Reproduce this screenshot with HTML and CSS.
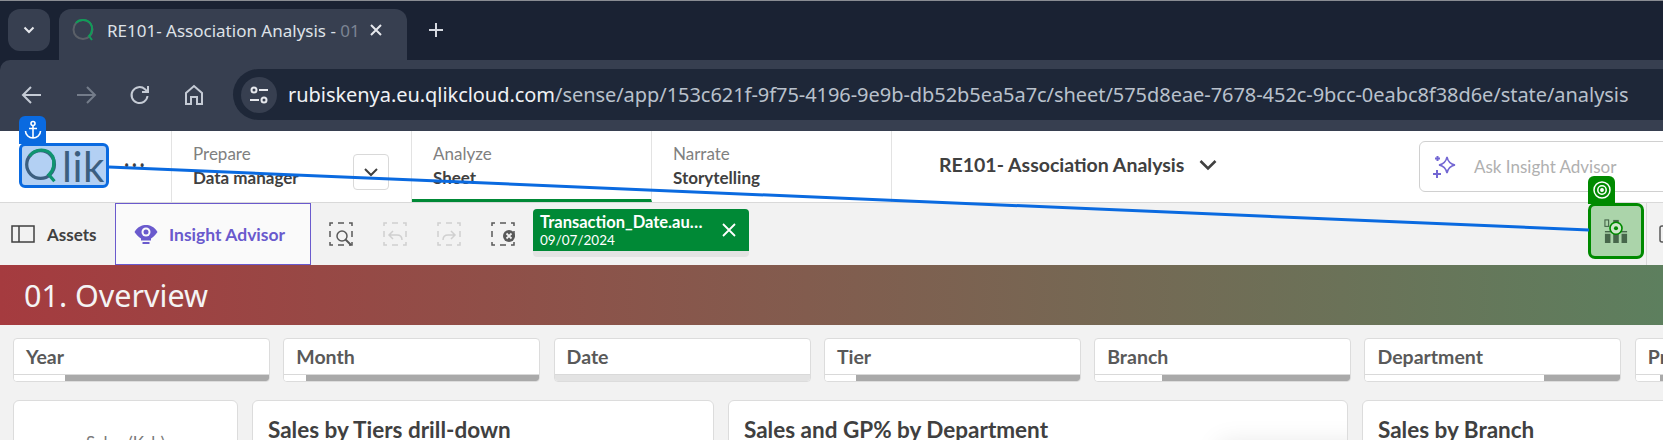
FILE: index.html
```html
<!DOCTYPE html>
<html lang="en">
<head>
    <meta charset="UTF-8">
    <title>RE101- Association Analysis</title>
    <link rel="stylesheet" href="styles.css">
</head>
<body>

    <!-- browser chrome -->
    <div class="chrome">
        <div class="tabstrip">
            <div class="tab-search">
                <svg width="14" height="14" viewBox="0 0 14 14"><path d="M2.500 4.500 7 9l4.500-4.500" fill="none" stroke="#e6e8ed" stroke-width="2"/></svg>
            </div>
            <div class="tab">
                <svg class="favicon" width="24" height="24" viewBox="0 0 24 24">
                    <circle cx="12" cy="11.500" r="9.500" fill="none" stroke="#5b6068" stroke-width="2"/>
                    <path d="M5 5C8 1 16 1 19.500 5.500C22 9 21.500 15 18 18L21 22" fill="none" stroke="#0f9d58" stroke-width="2"/>
                </svg>
                <span class="tab-title">RE101- Association Analysis - <span class="tab-fade">01</span></span>
                <svg class="tab-close" width="14" height="14" viewBox="0 0 14 14"><path d="M2 2l10 10M12 2 2 12" stroke="#e6e8ed" stroke-width="2"/></svg>
            </div>
            <svg class="tab-new" width="18" height="18" viewBox="0 0 18 18"><path d="M9 2v14M2 9h14" stroke="#d5d9e0" stroke-width="2"/></svg>
        </div>

        <div class="toolbar">
            <svg class="nav-icon" width="24" height="24" viewBox="0 0 24 24"><path d="M21 12H4M11 4l-8 8 8 8" fill="none" stroke="#c5cbd5" stroke-width="2"/></svg>
            <svg class="nav-icon" width="24" height="24" viewBox="0 0 24 24"><path d="M3 12h17M13 4l8 8-8 8" fill="none" stroke="#747c8a" stroke-width="2"/></svg>
            <svg class="nav-icon" width="24" height="24" viewBox="0 0 24 24"><path d="M19.500 13a8 8 0 1 1-2.500-6.800L20 9M20 3v6h-6" fill="none" stroke="#c5cbd5" stroke-width="2"/></svg>
            <svg class="nav-icon" width="24" height="24" viewBox="0 0 24 24"><path d="M4 21V10l8-7 8 7v11h-5v-7H9v7z" fill="none" stroke="#c5cbd5" stroke-width="2"/></svg>
            <div class="address">
                <div class="site-info">
                    <svg width="20" height="20" viewBox="0 0 20 20" fill="none" stroke="#e6e8ed" stroke-width="2">
                        <circle cx="5" cy="5" r="2.500"/><path d="M10 5h9M1 15h9"/><circle cx="15" cy="15" r="2.500"/>
                    </svg>
                </div>
                <span class="url"><span class="url-host">rubiskenya.eu.qlikcloud.com</span>/sense/app/153c621f-9f75-4196-9e9b-db52b5ea5a7c/sheet/575d8eae-7678-452c-9bcc-0eabc8f38d6e/state/analysis</span>
            </div>
        </div>
    </div>

    <!-- qlik header -->
    <div class="app-header">
        <div class="logo-area">
            <div class="logo">
                <div class="anchor-tab">
                    <svg width="20" height="20" viewBox="0 0 20 20" fill="none" stroke="#fff" stroke-width="1.600">
                        <circle cx="10" cy="3.500" r="2"/><path d="M10 5.500V18M6 8.500h8M2.500 11c0 4 3.500 7 7.500 7s7.500-3 7.500-7"/>
                    </svg>
                </div>
                <svg class="logo-q" width="37" height="37" viewBox="0 0 40 40" fill="none" stroke-width="3.500">
                    <circle cx="19" cy="19" r="15" stroke="#3c5f80"/>
                    <path d="M7 10C13 1 27 1 32 10C35 17 33 26 28 30L34 37" stroke="#0f9470"/>
                </svg>
                <span class="logo-text">lik</span>
            </div>
            <span class="more-dots">•••</span>
        </div>
        <div class="nav-tab prepare">
            <div>
                <div class="nav-label">Prepare</div>
                <div class="nav-value">Data manager</div>
            </div>
            <div class="nav-drop">
                <svg width="16" height="16" viewBox="0 0 16 16"><path d="M2 5l6 6 6-6" fill="none" stroke="#404040" stroke-width="2"/></svg>
            </div>
        </div>
        <div class="nav-tab active">
            <div>
                <div class="nav-label">Analyze</div>
                <div class="nav-value">Sheet</div>
            </div>
        </div>
        <div class="nav-tab">
            <div>
                <div class="nav-label">Narrate</div>
                <div class="nav-value">Storytelling</div>
            </div>
        </div>
        <div class="app-name">
            RE101- Association Analysis
            <svg width="18" height="18" viewBox="0 0 18 18"><path d="M1.500 5 9 12.500 16.500 5" fill="none" stroke="#404040" stroke-width="2.600"/></svg>
        </div>
        <div class="ask-box">
            <svg width="26" height="26" viewBox="0 0 26 26" fill="none" stroke="#7367d3" stroke-width="1.500">
                <path d="M15 3c1 5 3 7 8 8-5 1-7 3-8 8-1-5-3-7-8-8 5-1 7-3 8-8z"/>
                <path d="M5.500 2v5M3 4.500h5M5 16v8M1 20h8" stroke-width="2"/>
            </svg>
            <span>Ask Insight Advisor</span>
        </div>
    </div>

    <!-- sheet actions -->
    <div class="actions">
        <div class="assets">
            <svg width="24" height="18" viewBox="0 0 24 18" fill="none" stroke="#404040" stroke-width="1.500"><rect x="1" y="1" width="22" height="16"/><path d="M8 1v16"/></svg>
            Assets
        </div>
        <div class="insight-btn">
            <svg width="24" height="24" viewBox="0 0 24 24">
                <path d="M0.500 10C4 4.500 8 3 12 3s8 1.500 11.500 7c-2 3-4 5-6.500 6.500v2H7v-2C4.500 15 2.500 13 0.500 10z" fill="#6a5acd"/>
                <circle cx="12" cy="10" r="4.500" fill="#fafafa"/><circle cx="12" cy="10" r="2.500" fill="#6a5acd"/>
                <rect x="8.500" y="20" width="7" height="2" fill="#6a5acd"/>
            </svg>
            Insight Advisor
        </div>
        <div class="sel-tools">
            <svg width="24" height="24" viewBox="0 0 24 24" fill="none" stroke="#595959" stroke-width="1.500">
                <rect class="dash-frame" x="1" y="1" width="22" height="22"/>
                <circle cx="13" cy="14" r="5"/><path d="M16.500 17.500l5.500 5.500" stroke-width="2"/>
            </svg>
            <svg width="24" height="24" viewBox="0 0 24 24" fill="none" stroke="#d0d0d0" stroke-width="1.500">
                <rect class="dash-frame" x="1" y="1" width="22" height="22"/>
                <path d="M6 13h8c3 0 5 2 5 5M10 9l-4 4 4 4"/>
            </svg>
            <svg width="24" height="24" viewBox="0 0 24 24" fill="none" stroke="#d0d0d0" stroke-width="1.500">
                <rect class="dash-frame" x="1" y="1" width="22" height="22"/>
                <path d="M18 13h-7c-3 0-5 2-5 5M14 9l4 4-4 4"/>
            </svg>
            <svg width="24" height="24" viewBox="0 0 24 24" fill="none" stroke="#595959" stroke-width="1.500">
                <rect class="dash-frame" x="1" y="1" width="22" height="22"/>
                <circle cx="18" cy="14" r="6" fill="#595959" stroke="none"/>
                <path d="M15.500 11.500l5 5M20.500 11.500l-5 5" stroke="#f2f2f2" stroke-width="1.800"/>
            </svg>
        </div>
        <div class="chip">
            <div class="chip-body">
                <div class="chip-text">
                    <div class="chip-field">Transaction_Date.au…</div>
                    <div class="chip-value">09/07/2024</div>
                </div>
                <svg width="14" height="14" viewBox="0 0 14 14"><path d="M1 1l12 12M13 1 1 13" stroke="#fff" stroke-width="1.800"/></svg>
            </div>
        </div>
        <div class="target-box">
            <div class="target-tab">
                <svg width="20" height="20" viewBox="0 0 20 20" fill="none" stroke="#fff" stroke-width="1.500">
                    <circle cx="10" cy="10" r="8"/><circle cx="10" cy="10" r="4.200"/><circle cx="10" cy="10" r="1.200" fill="#fff"/>
                </svg>
            </div>
            <svg width="24" height="24" viewBox="0 0 26 26">
                <rect x="1" y="1" width="4" height="7" fill="none" stroke="#47674b" stroke-width="1.200"/>
                <rect x="10" y="1" width="6" height="6" fill="#47674b"/>
                <rect x="1" y="16" width="6" height="10" fill="#47674b"/>
                <rect x="10" y="16" width="6" height="10" fill="#47674b"/>
                <rect x="19" y="16" width="6" height="10" fill="#47674b"/>
                <rect x="1" y="13" width="24" height="1.500" fill="#47674b"/>
                <circle cx="13" cy="10" r="6.500" fill="#cfe6cb" stroke="#008a00" stroke-width="1.800"/>
                <circle cx="13" cy="10" r="2.200" fill="#008a00"/>
            </svg>
        </div>
        <div class="after-target">
            <svg width="16" height="18" viewBox="0 0 16 18"><rect x="1" y="1" width="22" height="16" rx="2" fill="none" stroke="#595959" stroke-width="1.500"/></svg>
        </div>
    </div>

    <div class="sheet-title">01. Overview</div>

    <!-- filter panes -->
    <div class="filters">
        <div class="filter"><div class="filter-name">Year</div><div class="filter-bar"><div class="filter-fill" style="margin-left: 51px"></div></div></div>
        <div class="filter"><div class="filter-name">Month</div><div class="filter-bar"><div class="filter-fill" style="margin-left: 22px"></div></div></div>
        <div class="filter"><div class="filter-name">Date</div><div class="filter-bar locked"></div></div>
        <div class="filter"><div class="filter-name">Tier</div><div class="filter-bar"><div class="filter-fill" style="margin-left: 31px"></div></div></div>
        <div class="filter"><div class="filter-name">Branch</div><div class="filter-bar"><div class="filter-fill" style="margin-left: 67px"></div></div></div>
        <div class="filter"><div class="filter-name">Department</div><div class="filter-bar"><div class="filter-fill" style="margin-left: 179px"></div></div></div>
        <div class="filter"><div class="filter-name">Product</div><div class="filter-bar"><div class="filter-fill" style="margin-left: 24px"></div></div></div>
    </div>

    <!-- chart cards, cut off by the window -->
    <div class="cards">
        <div class="card kpi"><div class="kpi-label">Sales (Ksh)</div></div>
        <div class="card tiers"><h2>Sales by Tiers drill-down</h2></div>
        <div class="card dept">
            <h2>Sales and GP% by Department</h2>
            <div class="popup-shadow"></div>
        </div>
        <div class="card branch"><h2>Sales by Branch</h2></div>
    </div>

    <!-- link drawn between the two annotated elements -->
    <svg class="link-line" width="1663" height="440" viewBox="0 0 1663 440">
        <line x1="109" y1="167" x2="1589" y2="230" stroke="#0a6ae0" stroke-width="3"/>
    </svg>

</body>
</html>
```

FILE: styles.css
```css
html, body {
    height: 440px;
    overflow: hidden;
}
body {
    margin: 0;
    position: relative;
    background: #f2f2f2;
    font-family: "Noto Sans", sans-serif;
    color: #404040;
}

/* browser chrome */
.chrome {
    background: #1a2233;
}
.tabstrip {
    height: 60px;
    box-sizing: border-box;
    padding: 8px 0 0 8px;
    display: flex;
    align-items: flex-start;
    border-top: 1px solid #8a8d93;
}
.tab-search {
    width: 42px;
    height: 42px;
    flex: none;
    border-radius: 12px;
    background: #373f50;
    display: flex;
    align-items: center;
    justify-content: center;
}
.tab {
    width: 348px;
    height: 51px;
    margin-left: 9px;
    flex: none;
    box-sizing: border-box;
    padding: 0 17px 9px 12px;
    display: flex;
    align-items: center;
    background: #373f50;
    border-radius: 12px 12px 0 0;
}
.favicon {
    flex: none;
}
.tab-title {
    width: 252px;
    margin-left: 12px;
    font-size: 17px;
    color: #dfe2e8;
    white-space: nowrap;
    overflow: hidden;
}
.tab-fade {
    color: #7c8493;
}
.tab-close {
    margin-left: 10px;
}
.tab-new {
    margin: 12px 0 0 20px;
}

.toolbar {
    height: 71px;
    box-sizing: border-box;
    padding: 9px 0 11px 20px;
    display: flex;
    align-items: center;
    gap: 30px;
    background: #373f50;
    border-radius: 10px 0 0 0;
}
.nav-icon {
    flex: none;
}
.address {
    flex: none;
    width: 1500px;
    height: 51px;
    margin-left: -3px;
    padding-left: 8px;
    display: flex;
    align-items: center;
    gap: 11px;
    background: #1e2738;
    border-radius: 26px 0 0 26px;
}
.site-info {
    width: 36px;
    height: 36px;
    flex: none;
    display: flex;
    align-items: center;
    justify-content: center;
    border-radius: 50%;
    background: #373f50;
}
.url {
    font-size: 20px;
    letter-spacing: -0.05px;
    color: #b9c1cc;
    white-space: nowrap;
}
.url-host {
    color: #f0f2f5;
}

/* qlik header */
.app-header {
    height: 72px;
    display: flex;
    background: #fff;
    border-bottom: 1px solid #d9d9d9;
    box-sizing: border-box;
}
.logo-area {
    width: 172px;
    flex: none;
    box-sizing: border-box;
    padding: 12px 0 0 19px;
    display: flex;
    align-items: flex-start;
    border-right: 1px solid #e3e3e3;
}
.logo {
    position: relative;
    width: 90px;
    height: 45px;
    flex: none;
    box-sizing: border-box;
    display: flex;
    align-items: center;
    padding-left: 1px;
    background: #b3d0f3;
    border: 3px solid #0a6ae0;
    border-radius: 6px;
}
.logo-q {
    flex: none;
}
.logo-text {
    margin-left: 2px;
    font-family: "Lato", sans-serif;
    font-size: 42px;
    font-weight: 400;
    line-height: 36px;
    letter-spacing: 0.5px;
    color: #3c5f80;
}
.anchor-tab {
    position: absolute;
    left: -3px;
    top: -30px;
    width: 27px;
    height: 28px;
    display: flex;
    align-items: center;
    justify-content: center;
    background: #0a6ae0;
    border-radius: 6px 6px 0 0;
}
.more-dots {
    margin: 13px 0 0 15px;
    font-size: 14px;
    line-height: 20px;
    letter-spacing: 2.500px;
    color: #404040;
}
.nav-tab {
    width: 240px;
    flex: none;
    box-sizing: border-box;
    padding: 11px 0 0 21px;
    display: flex;
    border-right: 1px solid #e3e3e3;
    font-family: "Lato", sans-serif;
}
.nav-tab.prepare {
    justify-content: space-between;
    padding-right: 22px;
}
.nav-tab.active {
    border-bottom: 3px solid #008936;
}
.nav-label {
    font-size: 17px;
    line-height: 24px;
    color: #808080;
}
.nav-value {
    font-size: 17px;
    line-height: 24px;
    font-weight: 700;
    color: #404040;
}
.nav-drop {
    width: 36px;
    height: 36px;
    margin-top: 12px;
    box-sizing: border-box;
    display: flex;
    align-items: center;
    justify-content: center;
    border: 1px solid #d9d9d9;
    border-radius: 4px;
}
.app-name {
    width: 480px;
    flex: none;
    box-sizing: border-box;
    padding: 0 0 4px 47px;
    display: flex;
    align-items: center;
    gap: 15px;
    font-family: "Lato", sans-serif;
    font-size: 19.500px;
    font-weight: 700;
    color: #404040;
}
.ask-box {
    flex: none;
    width: 300px;
    height: 51px;
    margin: 10px 0 0 47px;
    box-sizing: border-box;
    padding-left: 12px;
    display: flex;
    align-items: center;
    gap: 16px;
    border: 1px solid #d0d0d0;
    border-radius: 6px;
    font-family: "Lato", sans-serif;
    font-size: 17px;
    color: #b0b0b0;
}

/* sheet actions */
.actions {
    height: 62px;
    display: flex;
    align-items: center;
    background: #f2f2f2;
    font-family: "Lato", sans-serif;
}
.assets {
    width: 115px;
    flex: none;
    box-sizing: border-box;
    padding-left: 11px;
    display: flex;
    align-items: center;
    gap: 12px;
    font-size: 17px;
    font-weight: 700;
    color: #404040;
}
.insight-btn {
    width: 196px;
    height: 62px;
    flex: none;
    box-sizing: border-box;
    padding-left: 18px;
    display: flex;
    align-items: center;
    gap: 11px;
    background: #fafafa;
    border: 1px solid #6a5acd;
    font-size: 17.500px;
    font-weight: 700;
    color: #6a5acd;
}
.sel-tools {
    margin-left: 18px;
    display: flex;
    gap: 30px;
}
.dash-frame {
    stroke-dasharray: 6 5;
    stroke-dashoffset: 3;
}
.chip {
    width: 216px;
    height: 48px;
    margin: 6px 0 0 18px;
    align-self: flex-start;
    flex: none;
    background: #e3e3e3;
    border-radius: 4px;
    overflow: hidden;
}
.chip-body {
    height: 42px;
    box-sizing: border-box;
    padding: 0 13px 0 7px;
    display: flex;
    align-items: center;
    justify-content: space-between;
    background: #008936;
    color: #fff;
}
.chip-field {
    font-size: 16.500px;
    line-height: 20px;
    font-weight: 700;
}
.chip-value {
    font-size: 13.500px;
    line-height: 16px;
}
.target-box {
    position: relative;
    width: 56px;
    height: 56px;
    margin-left: 839px;
    align-self: flex-start;
    flex: none;
    box-sizing: border-box;
    display: flex;
    align-items: center;
    justify-content: center;
    background: #abd4aa;
    border: 3px solid #008a00;
    border-radius: 7px;
}
.target-tab {
    position: absolute;
    left: -3px;
    top: -30px;
    width: 27px;
    height: 28px;
    display: flex;
    align-items: center;
    justify-content: center;
    background: #008a00;
    border-radius: 6px 6px 0 0;
}
.after-target {
    height: 62px;
    margin-left: 2px;
    padding-left: 12px;
    display: flex;
    align-items: center;
    border-left: 1px solid #d9d9d9;
}

.sheet-title {
    height: 60px;
    box-sizing: border-box;
    padding-left: 24px;
    display: flex;
    align-items: center;
    background: linear-gradient(90deg, #a53b3f, #5d7f5e);
    font-size: 30.500px;
    color: #f4f4f4;
}

/* filter panes */
.filters {
    display: flex;
    gap: 13.300px;
    padding: 13px 0 0 13px;
    width: 1900px;
}
.filter {
    width: 257px;
    height: 44px;
    flex: none;
    box-sizing: border-box;
    display: flex;
    flex-direction: column;
    background: #fff;
    border: 1px solid #dcdcdc;
    border-radius: 4px;
    overflow: hidden;
}
.filter-name {
    height: 36px;
    flex: none;
    box-sizing: border-box;
    padding: 0 0 1px 12px;
    display: flex;
    align-items: center;
    border-bottom: 1px solid #d9d9d9;
    font-family: "Lato", sans-serif;
    font-size: 19.500px;
    font-weight: 700;
    color: #595959;
}
.filter-bar {
    flex: 1;
    display: flex;
    background: #fff;
}
.filter-bar.locked {
    background: #e3e3e3;
}
.filter-fill {
    flex: 1;
    background: #a9a9a9;
}

/* cards */
.cards {
    display: flex;
    gap: 14px;
    margin-top: 18px;
    padding-left: 13px;
    width: 1900px;
}
.card {
    height: 120px;
    flex: none;
    box-sizing: border-box;
    padding: 15px 15px;
    position: relative;
    overflow: hidden;
    background: #fff;
    border: 1px solid #dcdcdc;
    border-radius: 6px;
}
.card h2 {
    margin: 0;
    font-family: "Lato", sans-serif;
    font-size: 22.500px;
    line-height: 28px;
    font-weight: 700;
    color: #404040;
}
.kpi {
    width: 225px;
    padding-top: 31px;
    text-align: center;
}
.kpi-label {
    font-family: "Lato", sans-serif;
    font-size: 17px;
    color: #7a7a7a;
}
.tiers {
    width: 462px;
}
.dept {
    width: 620px;
}
.branch {
    width: 400px;
}
.popup-shadow {
    position: absolute;
    left: 500px;
    top: 52px;
    width: 200px;
    height: 60px;
    background: #f2f2f2;
    box-shadow: 0 0 24px 10px rgba(0,0,0,0.1);
}

.link-line {
    position: absolute;
    left: 0;
    top: 0;
    pointer-events: none;
}
```
